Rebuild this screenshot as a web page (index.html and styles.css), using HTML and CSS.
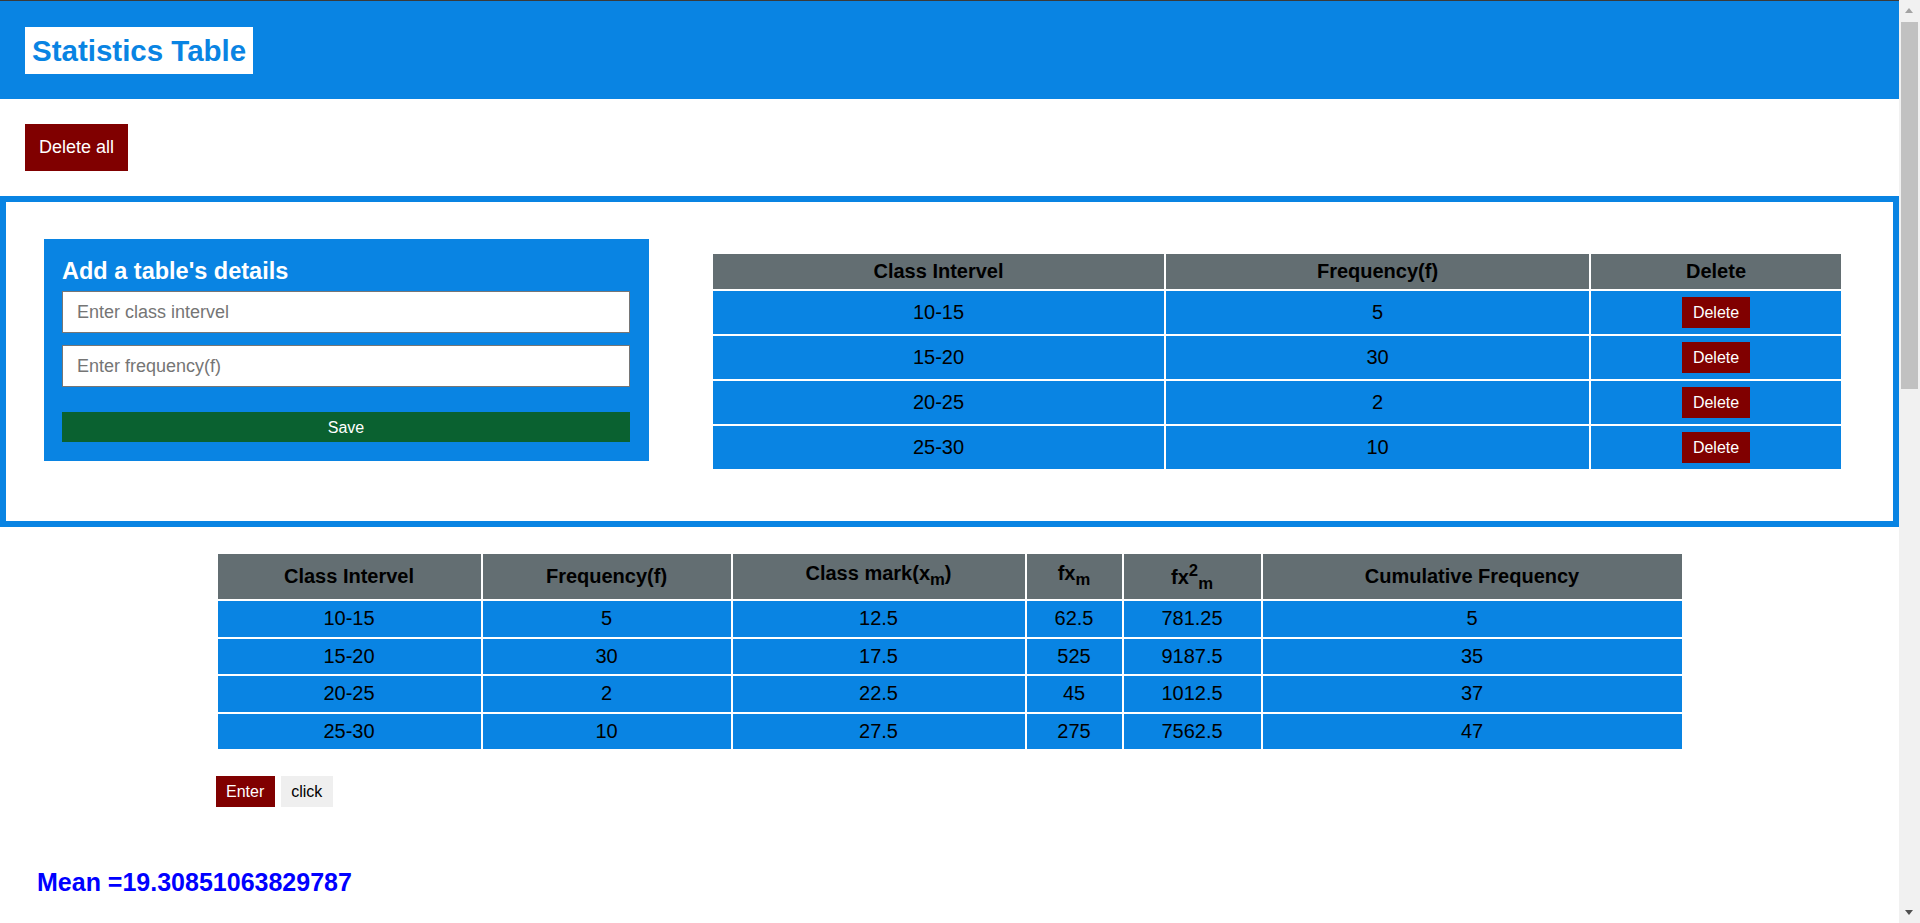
FILE: index.html
```html
<!DOCTYPE html>
<html lang="en">
<head>
<meta charset="utf-8">
<title>Statistics Table</title>
<link rel="stylesheet" href="styles.css">
</head>
<body>
<div class="page">
  <header class="topbar">
    <h1 class="brand">Statistics Table</h1>
  </header>

  <div class="toolbar">
    <button class="btn-danger btn-lg">Delete all</button>
  </div>

  <section class="editor">
    <form class="panel">
      <h2 class="panel-title">Add a table's details</h2>
      <input class="field" type="text" placeholder="Enter class intervel">
      <input class="field" type="text" placeholder="Enter frequency(f)">
      <button class="btn-save" type="button">Save</button>
    </form>

    <table class="grid entries">
      <colgroup>
        <col class="c-int"><col class="c-freq"><col class="c-del">
      </colgroup>
      <thead>
        <tr><th>Class Intervel</th><th>Frequency(f)</th><th>Delete</th></tr>
      </thead>
      <tbody>
        <tr><td>10-15</td><td>5</td><td><button class="btn-danger btn-sm">Delete</button></td></tr>
        <tr><td>15-20</td><td>30</td><td><button class="btn-danger btn-sm">Delete</button></td></tr>
        <tr><td>20-25</td><td>2</td><td><button class="btn-danger btn-sm">Delete</button></td></tr>
        <tr><td>25-30</td><td>10</td><td><button class="btn-danger btn-sm">Delete</button></td></tr>
      </tbody>
    </table>
  </section>

  <section class="results">
    <table class="grid stats">
      <colgroup>
        <col class="s1"><col class="s2"><col class="s3"><col class="s4"><col class="s5"><col class="s6">
      </colgroup>
      <thead>
        <tr>
          <th>Class Intervel</th>
          <th>Frequency(f)</th>
          <th>Class mark(x<sub>m</sub>)</th>
          <th>fx<sub>m</sub></th>
          <th>fx<sup>2</sup><sub>m</sub></th>
          <th>Cumulative Frequency</th>
        </tr>
      </thead>
      <tbody>
        <tr><td>10-15</td><td>5</td><td>12.5</td><td>62.5</td><td>781.25</td><td>5</td></tr>
        <tr><td>15-20</td><td>30</td><td>17.5</td><td>525</td><td>9187.5</td><td>35</td></tr>
        <tr><td>20-25</td><td>2</td><td>22.5</td><td>45</td><td>1012.5</td><td>37</td></tr>
        <tr><td>25-30</td><td>10</td><td>27.5</td><td>275</td><td>7562.5</td><td>47</td></tr>
      </tbody>
    </table>
    <div class="actions">
      <button class="btn-danger btn-sm">Enter</button>
      <button class="btn-plain btn-sm">click</button>
    </div>
  </section>

  <h2 class="mean">Mean =19.30851063829787</h2>
</div>

<div class="scrollbar" aria-hidden="true">
  <span class="sb-arrow sb-up"></span>
  <span class="sb-thumb"></span>
  <span class="sb-arrow sb-down"></span>
</div>
</body>
</html>
```

FILE: styles.css
```css
::-webkit-scrollbar {
  display: none;
  width: 0;
}

body {
  margin: 0;
  font-family: "Liberation Sans", Arial, sans-serif;
  color: #000;
  background: #fff;
}

.page {
  margin-right: 21px;
  padding-bottom: 40px;
}

button {
  font-family: "Liberation Sans", Arial, sans-serif;
  border: 0;
  cursor: pointer;
}

/* fake window scrollbar */
.scrollbar {
  position: fixed;
  top: 0;
  right: 0;
  width: 21px;
  height: 100%;
  background: #f1f1f1;
}
.sb-thumb {
  position: absolute;
  top: 22px;
  left: 2px;
  width: 17px;
  height: 367px;
  background: #c1c1c1;
}
.sb-arrow {
  position: absolute;
  left: 6px;
  width: 0;
  height: 0;
  border-left: 4.5px solid transparent;
  border-right: 4.5px solid transparent;
}
.sb-up {
  top: 8px;
  border-bottom: 5px solid #a3a3a3;
}
.sb-down {
  bottom: 8px;
  border-top: 5px solid #505050;
}

/* header */
.topbar {
  box-sizing: border-box;
  height: 99px;
  border-top: 1px solid #3a3a3a;
  background: #0984e3;
  padding: 26px 25px 0;
}
.brand {
  display: inline-block;
  margin: 0;
  padding: 6px 7px;
  background: #fff;
  color: #0984e3;
  font-size: 29.5px;
  line-height: 35px;
  font-weight: bold;
}

/* toolbar */
.toolbar {
  padding: 25px 25px;
}
.btn-danger {
  background: #800000;
  color: #fff;
}
.btn-plain {
  background: #efefef;
  color: #000;
}
.btn-lg {
  font-size: 18px;
  line-height: 21px;
  padding: 13px 14px;
}
.btn-sm {
  font-size: 16px;
  line-height: 19px;
  padding: 6px 10.5px;
}

/* editor box */
.editor {
  display: flex;
  align-items: flex-start;
  gap: 62px;
  border: 6px solid #0984e3;
  padding: 37px 50px 50px 38px;
}
.panel {
  box-sizing: border-box;
  flex: 0 0 605px;
  width: 605px;
  margin: 0 0 10px;
  padding: 19px 19px 19px 18px;
  background: #0984e3;
}
.panel-title {
  margin: 0 0 6px;
  color: #fff;
  font-size: 23.5px;
  line-height: 27px;
  font-weight: bold;
}
.field {
  display: block;
  box-sizing: border-box;
  width: 100%;
  height: 42px;
  margin: 0 0 12px;
  padding: 0 14px;
  border: 1px solid #767676;
  background: #fff;
  font-family: "Liberation Sans", Arial, sans-serif;
  font-size: 18px;
  color: #000;
  outline: none;
}
.field::placeholder {
  color: #757575;
}
.btn-save {
  display: block;
  width: 100%;
  height: 30px;
  margin-top: 25px;
  background: #0a6130;
  color: #fff;
  font-size: 16px;
  line-height: 19px;
  padding: 0;
}

/* tables */
.grid {
  border-collapse: separate;
  border-spacing: 2px;
  table-layout: fixed;
}
.grid th,
.grid td {
  padding: 0;
  text-align: center;
  vertical-align: middle;
  font-size: 20px;
  line-height: 23px;
}
.grid th {
  background: #636e72;
  color: #000;
  font-weight: bold;
}
.grid td {
  background: #0984e3;
  color: #000;
}

.entries {
  flex: 1 1 auto;
  width: 1132px;
  margin-top: 13px;
}
.entries .c-int { width: 451px; }
.entries .c-freq { width: 423px; }
.entries .c-del { width: 250px; }
.entries thead tr { height: 35px; }
.entries tbody tr { height: 43px; }

.results {
  width: 1468px;
  margin: 25px auto 0;
}
.stats {
  width: 100%;
}
.stats .s1 { width: 263px; }
.stats .s2 { width: 248px; }
.stats .s3 { width: 292px; }
.stats .s4 { width: 95px; }
.stats .s5 { width: 137px; }
.stats .s6 { width: 419px; }
.stats thead tr { height: 45px; }
.stats tbody tr { height: 35.5px; }

.actions {
  display: flex;
  gap: 6px;
  margin-top: 25px;
}

.mean {
  margin: 61px 0 0;
  padding-left: 37px;
  color: #0000ff;
  font-size: 25px;
  line-height: 29px;
  font-weight: bold;
}
```
